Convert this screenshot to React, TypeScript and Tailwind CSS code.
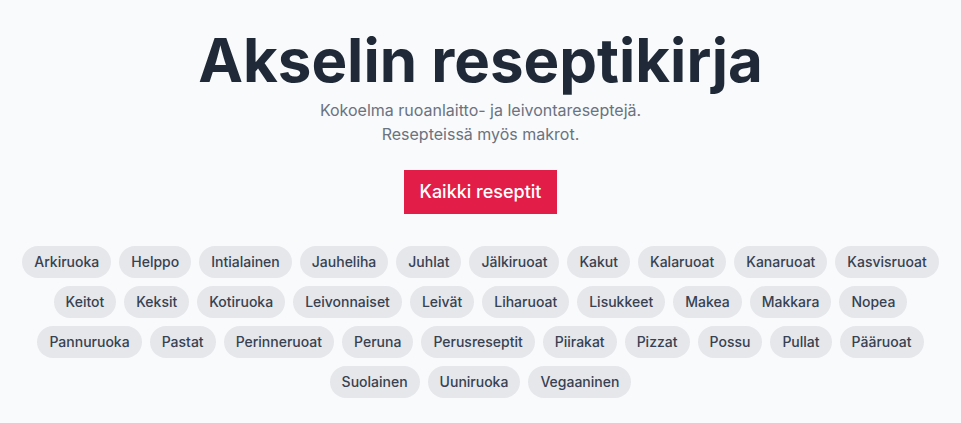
const tags = [
  "Arkiruoka", "Helppo", "Intialainen", "Jauheliha", "Juhlat", "Jälkiruoat", "Kakut", "Kalaruoat", "Kanaruoat", "Kasvisruoat",
  "Keitot", "Keksit", "Kotiruoka", "Leivonnaiset", "Leivät", "Liharuoat", "Lisukkeet", "Makea", "Makkara", "Nopea",
  "Pannuruoka", "Pastat", "Perinneruoat", "Peruna", "Perusreseptit", "Piirakat", "Pizzat", "Possu", "Pullat", "Pääruoat",
  "Suolainen", "Uuniruoka", "Vegaaninen",
];

export default function App() {
  return (
    <main className="w-full min-h-screen bg-[#f9fafb]" style={{ fontFamily: "Inter, 'Noto Sans', sans-serif" }}>
      <section className="flex flex-col items-center px-4 pt-[30px] pb-8 text-center">
        <h1 className="text-6xl font-bold text-[#1f2937] leading-none">Akselin reseptikirja</h1>
        <p className="mt-2 text-base text-[#6b7280]">
          Kokoelma ruoanlaitto- ja leivontareseptejä.
          <br />
          Resepteissä myös makrot.
        </p>
        <a href="#" className="mt-6 bg-[#e11d48] px-4 py-2 text-lg font-medium text-white">
          Kaikki reseptit
        </a>

        {/* Tags */}
        <div className="mt-8 flex flex-wrap justify-center gap-2">
          {tags.map((t) => (
            <span key={t} className="rounded-full bg-[#e5e7eb] px-3 py-1.5 text-sm font-medium text-[#374151]">
              {t}
            </span>
          ))}
        </div>
      </section>
    </main>
  );
}
